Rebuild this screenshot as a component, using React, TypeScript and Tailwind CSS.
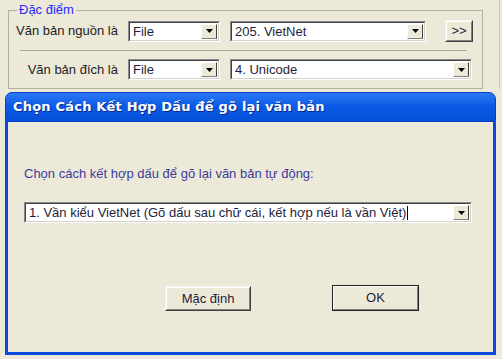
import React from "react";

const Arrow = () => (
  <div className="w-[16px] h-full flex items-center justify-center bg-[#ece9d8] border border-t-white border-l-white border-b-[#808080] border-r-[#404040]">
    <svg width="7" height="4" viewBox="0 0 7 4">
      <path d="M0 0h7L3.5 4z" fill="#000" />
    </svg>
  </div>
);

function Select({ wClass, text, caret }: { wClass: string; text: string; caret?: boolean }) {
  return (
    <div className={`${wClass} h-[21px] flex bg-white border border-t-[#8a8a8a] border-l-[#8a8a8a] border-b-white border-r-white`}>
      <div className="flex-1 flex border border-t-[#404040] border-l-[#404040] border-b-[#d4d0c8] border-r-[#d4d0c8] pr-[1px] py-[1px]">
        <div className="flex-1 flex items-center pl-[3px] text-[13px] leading-none text-[#1e1e3c] whitespace-nowrap overflow-hidden">
          {text}
          {caret && <span className="inline-block w-[1px] h-[14px] bg-black ml-[1px]" />}
        </div>
        <Arrow />
      </div>
    </div>
  );
}

function Btn({ wClass, hClass, text, def }: { wClass: string; hClass: string; text: string; def?: boolean }) {
  const inner = (
    <div className="h-full w-full flex items-center justify-center border border-t-white border-l-white border-b-[#808080] border-r-[#808080] text-[13px] text-[#1e1e3c]">
      {text}
    </div>
  );
  return (
    <div className={`${wClass} ${hClass} flex ${def ? "border border-[#202020]" : "border border-t-[#f4f4f4] border-l-[#f4f4f4] border-b-[#404040] border-r-[#404040]"}`}>
      {inner}
    </div>
  );
}

export default function App() {
  return (
    <div
      className="w-[502px] h-[359px] bg-[#ece9d8] overflow-hidden"
      style={{ fontFamily: '"Liberation Sans", Arial, sans-serif' }}
    >
      <div className="w-[500px] pt-[3px] border-r border-r-[#c8c4b0]">
        <fieldset className="ml-[8px] w-[475px] border border-[#b4b09c] pb-[8px]">
          <legend className="ml-[8px] px-[2px] text-[13px] leading-[14px] text-[#2828ff]">Đặc điểm</legend>
          <div className="mt-[3px] flex items-center">
            <div className="w-[119px] pr-[10px] text-right text-[13px] text-[#1c1c1c] whitespace-nowrap">Văn bản nguồn là</div>
            <Select wClass="w-[92px]" text="File" />
            <div className="w-[10px]" />
            <Select wClass="w-[196px]" text="205. VietNet" />
            <div className="ml-[19px]">
              <Btn wClass="w-[28px]" hClass="h-[22px]" text=">>" />
            </div>
          </div>
          <div className="mt-[8px] ml-[11px] w-[447px] h-[1px] bg-[#aca899]" />
          <div className="mt-[8px] flex items-center">
            <div className="w-[119px] pr-[10px] text-right text-[13px] text-[#1c1c1c] whitespace-nowrap">Văn bản đích là</div>
            <Select wClass="w-[92px]" text="File" />
            <div className="w-[10px]" />
            <Select wClass="w-[242px]" text="4. Unicode" />
          </div>
        </fieldset>
      </div>

      <div className="ml-[5px] mt-[3px] w-[491px] flex flex-col">
        <div className="h-[30px] rounded-t-[7px] bg-gradient-to-b from-[#2a78f4] via-[#0a58e4] to-[#0650d8] border border-[#0a3ccc] flex items-center pl-[7px]">
          <span
            className="text-white font-bold text-[13px] tracking-[0.2px] [text-shadow:1px_1px_0_#0a2a90]"
            style={{ fontFamily: '"DejaVu Sans", Verdana, sans-serif' }}
          >
            Chọn Cách Kết Hợp Dấu để gõ lại văn bản
          </span>
        </div>
        <div className="h-[233px] border-l-[3px] border-r-[3px] border-b-[3px] border-[#0a48e0] pl-[16px] pt-[44px] flex flex-col">
          <div className="text-[13px] leading-[15px] text-[#3c3c9c]">Chọn cách kết hợp dấu để gõ lại văn bản tự động:</div>
          <div className="mt-[21px]">
            <Select wClass="w-[448px]" text="1. Vần kiểu VietNet (Gõ dấu sau chữ cái, kết hợp nếu là vần Việt)" caret />
          </div>
          <div className="mt-[63px] ml-[141px] flex items-start">
            <Btn wClass="w-[86px]" hClass="h-[25px]" text="Mặc định" />
            <div className="ml-[81px] -mt-[1px]">
              <Btn wClass="w-[87px]" hClass="h-[26px]" text="OK" def />
            </div>
          </div>
        </div>
      </div>
    </div>
  );
}
